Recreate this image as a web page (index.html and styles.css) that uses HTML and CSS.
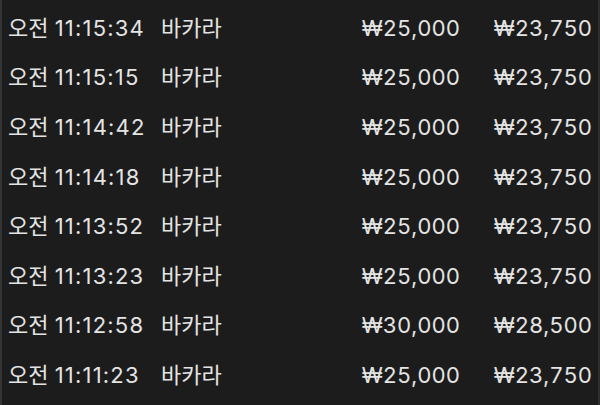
FILE: index.html
```html
<!DOCTYPE html>
<html lang="ko">
<head>
    <meta charset="UTF-8">
    <meta name="viewport" content="width=device-width, initial-scale=1.0">
    <title>게임 내역</title>
    <link rel="stylesheet" href="styles.css">
</head>
<body>

<div class="history">
    <div class="row">
        <span class="time">오전 <span class="clock">11:15:34</span></span>
        <span class="game">바카라</span>
        <span class="bet">₩25,000</span>
        <span class="win">₩23,750</span>
    </div>
    <div class="row">
        <span class="time">오전 <span class="clock">11:15:15</span></span>
        <span class="game">바카라</span>
        <span class="bet">₩25,000</span>
        <span class="win">₩23,750</span>
    </div>
    <div class="row">
        <span class="time">오전 <span class="clock">11:14:42</span></span>
        <span class="game">바카라</span>
        <span class="bet">₩25,000</span>
        <span class="win">₩23,750</span>
    </div>
    <div class="row">
        <span class="time">오전 <span class="clock">11:14:18</span></span>
        <span class="game">바카라</span>
        <span class="bet">₩25,000</span>
        <span class="win">₩23,750</span>
    </div>
    <div class="row">
        <span class="time">오전 <span class="clock">11:13:52</span></span>
        <span class="game">바카라</span>
        <span class="bet">₩25,000</span>
        <span class="win">₩23,750</span>
    </div>
    <div class="row">
        <span class="time">오전 <span class="clock">11:13:23</span></span>
        <span class="game">바카라</span>
        <span class="bet">₩25,000</span>
        <span class="win">₩23,750</span>
    </div>
    <div class="row">
        <span class="time">오전 <span class="clock">11:12:58</span></span>
        <span class="game">바카라</span>
        <span class="bet">₩30,000</span>
        <span class="win">₩28,500</span>
    </div>
    <div class="row">
        <span class="time">오전 <span class="clock">11:11:23</span></span>
        <span class="game">바카라</span>
        <span class="bet">₩25,000</span>
        <span class="win">₩23,750</span>
    </div>
</div>

</body>
</html>
```

FILE: styles.css
```css
html, body {
    margin: 0;
    height: 100%;
    background-color: #1c1c1c;
}
body {
    font-family: Inter, "Noto Sans CJK KR", sans-serif;
    color: #e4e4e4;
    overflow: hidden;
}
.history {
    box-sizing: border-box;
    height: 405px;
    padding: 3px 6px 0 6px;
    border-left: 2px solid #343434;
    border-right: 2px solid #2e2e2e;
}
.row {
    display: grid;
    grid-template-columns: 153px 1fr 132px 132px;
    align-items: center;
    height: 49.6px;
    font-size: 22px;
    line-height: 1;
}
.clock {
    letter-spacing: 1.2px;
}
.bet, .win {
    text-align: right;
    font-variant-numeric: tabular-nums;
}
```
